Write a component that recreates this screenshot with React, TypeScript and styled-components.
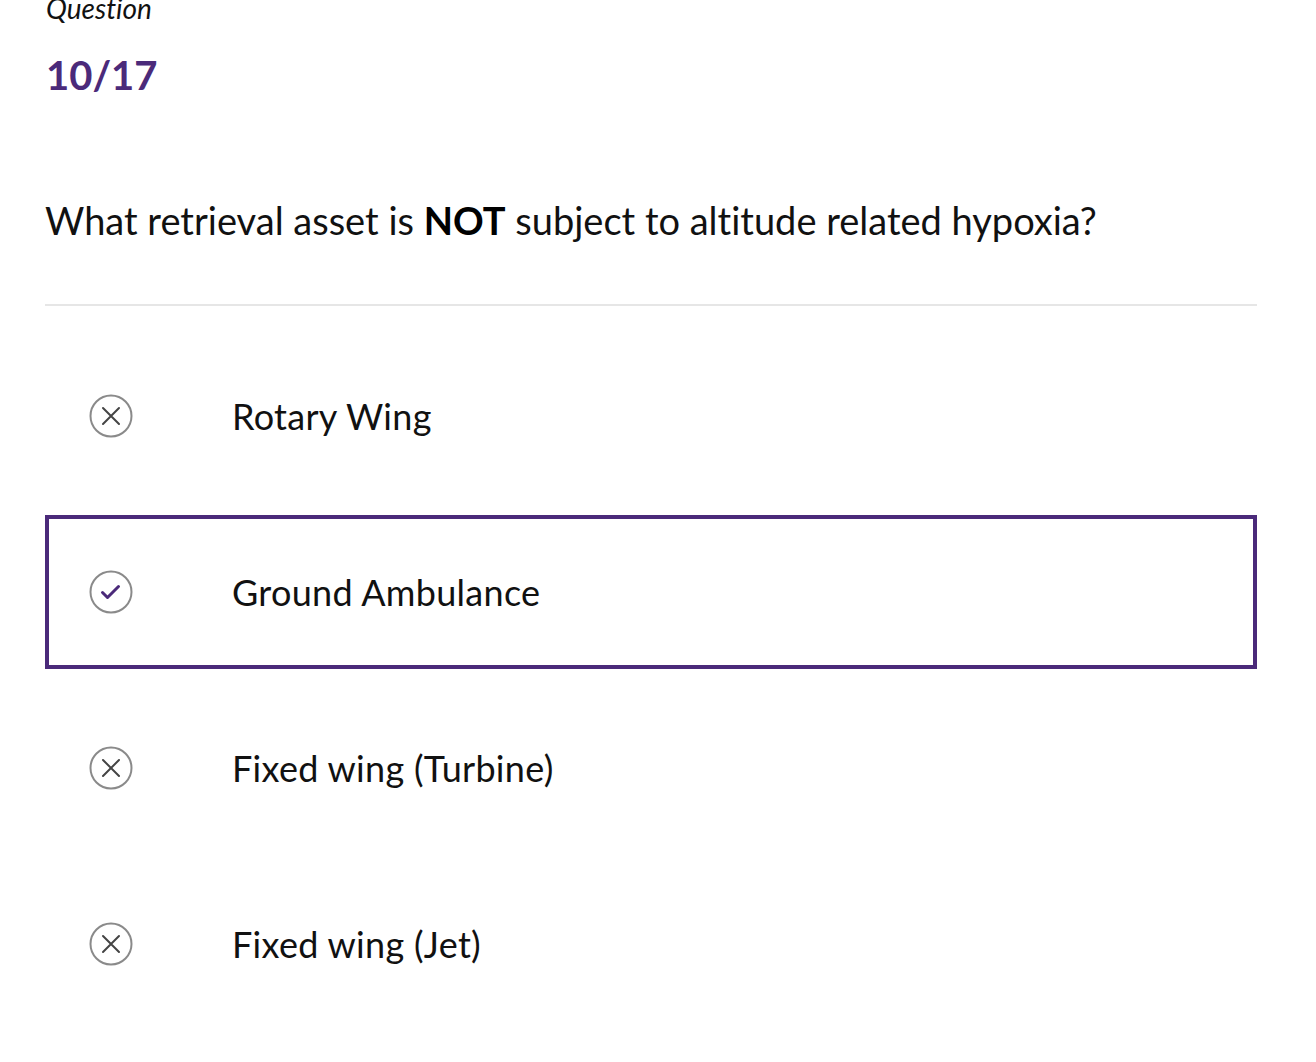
import React from "react";
import styled, { createGlobalStyle } from "styled-components";

const Global = createGlobalStyle`
  html, body { margin: 0; padding: 0; background: #ffffff; }
  body { font-family: Lato, "Open Sans", sans-serif; color: #111; font-variant-ligatures: none; }
`;

const Page = styled.main`
  width: 1212px;
  padding: 0 0 40px 45px;
  overflow: hidden;
`;

const Label = styled.div`
  font-style: italic;
  font-size: 28px;
  line-height: 30px;
  margin-top: -7px;
  padding-left: 1px;
  color: #111;
`;

const Counter = styled.div`
  font-weight: 700;
  font-size: 40px;
  line-height: 52px;
  margin-top: 26px;
  padding-left: 1px;
  color: #4b2a7a;
`;

const QuestionText = styled.p`
  font-size: 38px;
  line-height: 44px;
  margin: 97px 0 0;
  font-weight: 400;
  color: #111;
  b { font-weight: 700; color: #000; }
`;

const Divider = styled.hr`
  border: none;
  height: 2px;
  background: #e6e6e6;
  margin: 62px 0 0;
`;

const Options = styled.ul`
  list-style: none;
  margin: 33px 0 0;
  padding: 0;
  display: flex;
  flex-direction: column;
  gap: 22px;
`;

const Option = styled.li<{ $selected?: boolean }>`
  box-sizing: border-box;
  height: 154px;
  display: flex;
  align-items: center;
  padding-left: 40px;
  border: 4px solid ${(p) => (p.$selected ? "#4b2a7a" : "transparent")};
`;

const IconCircle = styled.span`
  width: 44px;
  height: 44px;
  flex: none;
  display: flex;
  align-items: center;
  justify-content: center;
`;

const OptionText = styled.span`
  margin-left: 99px;
  font-size: 36px;
  letter-spacing: 0.3px;
  color: #111;
`;

const CrossIcon = () => (
  <svg width="44" height="44" viewBox="0 0 44 44">
    <circle cx="22" cy="22" r="20.5" fill="none" stroke="#8a8a8a" strokeWidth="2" />
    <path d="M14 14 L30 30 M30 14 L14 30" stroke="#444" strokeWidth="2" strokeLinecap="round" />
  </svg>
);

const CheckIcon = () => (
  <svg width="44" height="44" viewBox="0 0 44 44">
    <circle cx="22" cy="22" r="20.5" fill="none" stroke="#8a8a8a" strokeWidth="2" />
    <path d="M13.5 22.5 L18.5 27.5 L29.5 16.5" fill="none" stroke="#4b2a7a" strokeWidth="3" strokeLinecap="round" strokeLinejoin="round" />
  </svg>
);

const options = [
  { text: "Rotary Wing", selected: false },
  { text: "Ground Ambulance", selected: true },
  { text: "Fixed wing (Turbine)", selected: false },
  { text: "Fixed wing (Jet)", selected: false },
];

export default function App() {
  return (
    <>
      <Global />
      <Page>
        <Label>Question</Label>
        <Counter>10/17</Counter>
        <QuestionText>
          What retrieval asset is <b>NOT</b> subject to altitude related hypoxia?
        </QuestionText>
        <Divider />
        <Options>
          {options.map((o) => (
            <Option key={o.text} $selected={o.selected}>
              <IconCircle>{o.selected ? <CheckIcon /> : <CrossIcon />}</IconCircle>
              <OptionText>{o.text}</OptionText>
            </Option>
          ))}
        </Options>
      </Page>
    </>
  );
}
